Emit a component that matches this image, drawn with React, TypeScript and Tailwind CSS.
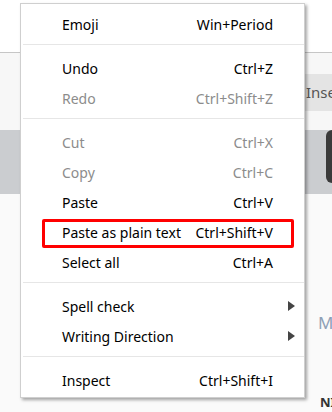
import { Fragment } from 'react'

type Item = {
  label: string
  shortcut?: string
  disabled?: boolean
  submenu?: boolean
}

const groups: Item[][] = [
  [{ label: 'Emoji', shortcut: 'Win+Period' }],
  [
    { label: 'Undo', shortcut: 'Ctrl+Z' },
    { label: 'Redo', shortcut: 'Ctrl+Shift+Z', disabled: true },
  ],
  [
    { label: 'Cut', shortcut: 'Ctrl+X', disabled: true },
    { label: 'Copy', shortcut: 'Ctrl+C', disabled: true },
    { label: 'Paste', shortcut: 'Ctrl+V' },
    { label: 'Paste as plain text', shortcut: 'Ctrl+Shift+V' },
    { label: 'Select all', shortcut: 'Ctrl+A' },
  ],
  [
    { label: 'Spell check', submenu: true },
    { label: 'Writing Direction', submenu: true },
  ],
  [{ label: 'Inspect', shortcut: 'Ctrl+Shift+I' }],
]

function MenuRow({ item }: { item: Item }) {
  return (
    <div
      className={`flex h-[30px] items-center pl-[41px] pr-[31px] ${
        item.disabled ? 'text-[#8c8c8c]' : 'text-black'
      }`}
    >
      <span className="flex-1 whitespace-nowrap">{item.label}</span>
      {item.shortcut && <span className="whitespace-nowrap">{item.shortcut}</span>}
      {item.submenu && (
        <svg width="7" height="10" viewBox="0 0 7 10" className="mr-[-22px]">
          <path d="M0 0 L7 5 L0 10 Z" fill="#444" />
        </svg>
      )}
    </div>
  )
}

export default function App() {
  return (
    <div
      className="relative h-[412px] w-[332px] overflow-hidden bg-[#fafafa]"
      style={{ fontFamily: '"Noto Sans", "Open Sans", sans-serif' }}
    >
      {/* page behind the menu */}
      <div className="flex flex-col">
        <div className="h-[53px] border-b border-[#c6c6c6] bg-white" />
        <div className="flex h-[77px] flex-col bg-[#f7f7f7]">
          <div className="mt-[21px] flex h-[37px] items-center justify-end">
            <div className="flex h-full w-[28px] items-center overflow-hidden bg-[#e4e4e4] pl-[2px] text-[15px] text-[#555]">
              Insert
            </div>
          </div>
        </div>
        <div className="flex h-[64px] justify-end bg-[#cbcdd0]">
          <div className="h-[53px] w-[6px] rounded-tl-[6px] rounded-bl-[6px] bg-[#3a3a3a]" />
        </div>
        <div className="flex h-[218px] flex-col items-end bg-[#fafafa]">
          <div className="mt-[116px] w-[14px] overflow-hidden text-[17px] text-[#8fa0b6]">M</div>
          <div className="mt-[58px] w-[12px] overflow-hidden text-[13px] font-bold text-[#333]">NI</div>
        </div>
      </div>

      {/* context menu */}
      <div className="absolute left-[20px] top-[3px] w-[285px] border border-[#cfcfcf] bg-white pt-[5px] pb-[2px] text-[14px] shadow-[2px_2px_3px_rgba(0,0,0,0.35)]">
        {groups.map((group, gi) => (
          <Fragment key={gi}>
            {gi > 0 && <div className="mb-[8px] ml-[2px] mt-[5px] h-px bg-[#e6e6e6]" />}
            {group.map((item) => (
              <MenuRow key={item.label} item={item} />
            ))}
          </Fragment>
        ))}
      </div>

      {/* highlight box */}
      <div className="absolute left-[42px] top-[219px] h-[29px] w-[252px] rounded-[2px] border-[3px] border-[#ff0000]" />
    </div>
  )
}
